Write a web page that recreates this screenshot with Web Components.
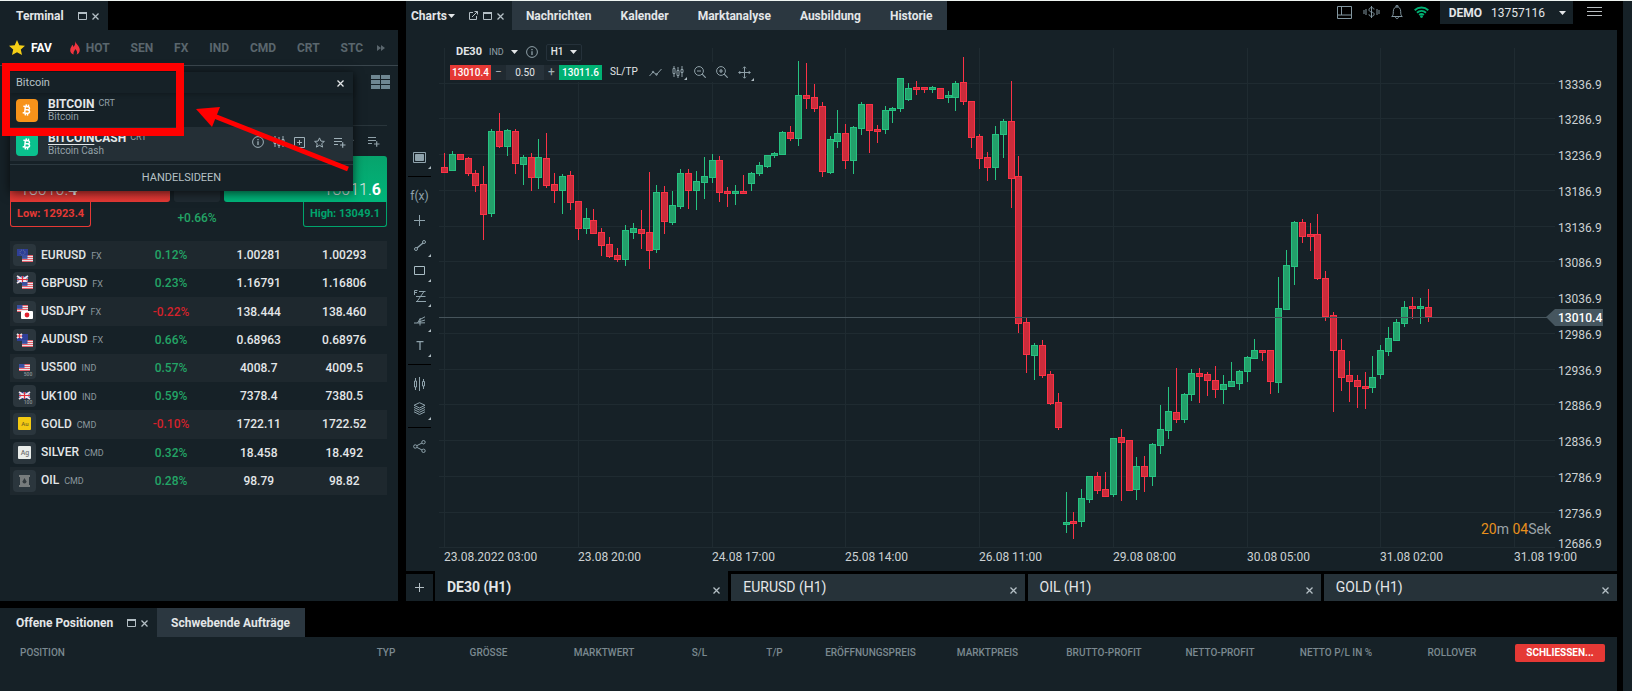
<!DOCTYPE html>
<html lang="de">
<head>
<meta charset="utf-8">
<meta name="viewport" content="width=device-width, initial-scale=1">
<title>Terminal</title>
<style>
  html, body { margin: 0; height: 100%; background: #000; }
  body {
    --panel: #162127; --tab: #2b3740; --text: #e3e6e8; --muted: #7b8990;
    --green: #23a566; --buy: #00b173; --red: #e53935; --line: #2b383f;
    font-family: Roboto, "Noto Sans", sans-serif; font-size: 12px; line-height: 16px; color: var(--text);
  }
</style>
</head>
<body>
<trading-app></trading-app>
<script>
const RESET = `
  *, *::before { box-sizing: border-box; }
  button, input, select { font: inherit; color: inherit; background: none; border: 0; margin: 0; padding: 0; border-radius: 0; outline: 0; }
  button { cursor: pointer; white-space: nowrap; }
  a { color: inherit; text-decoration: none; }
  svg { display: block; }
`;

class BaseElement extends HTMLElement {
  connectedCallback() {
    if (this.shadowRoot) return;
    const root = this.attachShadow({ mode: 'open' });
    root.innerHTML = `<style>${RESET}${this.css()}</style>${this.html()}`;
    this.ready?.();
  }
  attr(name, fallback = '') { return this.getAttribute(name) ?? fallback; }
}

/* ---------- icons ---------- */
const ICONS = {
  max: [9, 8, '<path d="M.5 1h8v6.500h-8z"/><path d="M0 1h9" stroke-width="2"/>'],
  close: [7, 7, '<path d="M.5.5l6 6M6.500.5l-6 6" stroke-width="1.300"/>'],
  detach: [9, 9, '<path d="M4 1.500H.5v7h7V5M5.500.5h3v3M8.500.5L3 6"/>'],
  caret: [7, 4, '<path d="M0 0h7L3.500 4z" fill="currentColor" stroke="none"/>'],
  star: [16, 15, '<path d="M8 0l2.300 5.200 5.700.6-4.200 3.800 1.200 5.400L8 12.200 3 15l1.200-5.400L0 5.800l5.700-.6z" fill="#f5cf16" stroke="none"/>'],
  flame: [10, 14, '<path d="M5.200 0c.3 2.800 4.600 4.800 4.600 8.800 0 2.600-1.500 4.300-3.300 4.800 1.300-1.900.5-4-1.400-5.600-.2 1.700-2.300 3.300-1.300 5.600C1.600 13.200.2 11.500.2 9.300c0-2.500 1.600-3.800 2-5.500.8.5 1.200 1.200 1.300 2.200C4.900 4.600 5.500 2.600 5.200 0z" fill="#f0343f" stroke="none"/>'],
  more: [8, 6, '<path d="M0 0l4 3-4 3zM4 0l4 3-4 3z" fill="currentColor" stroke="none"/>'],
  tiles: [19, 14, '<path d="M0 0h9v4H0zM10 0h9v4h-9zM0 5h9v4H0zM10 5h9v4h-9zM0 10h9v4H0zM10 10h9v4h-9z" fill="#6f8792" stroke="none"/>'],
  info: [12, 12, '<circle cx="6" cy="6" r="5.400"/><path d="M6 5.200V9M6 3v1.200" stroke-width="1.300"/>'],
  candles: [12, 12, '<path d="M2 0v2M2 8v3M1 2.500h2v5H1zM6 1v3M6 10v2M5 4.500h2v5H5zM10 0v3M10 7v4M9 3.500h2v3H9z"/>'],
  plusbox: [11, 11, '<path d="M.5.5h10v10H.5zM5.500 3v5M3 5.500h5"/>'],
  staro: [11, 11, '<path d="M5.500.9l1.400 3.200 3.500.3-2.700 2.300.9 3.400-3.100-1.800-3.100 1.800.9-3.400L.6 4.400l3.500-.3z"/>'],
  listadd: [12, 11, '<path d="M0 1.500h8M0 4.500h8M0 7.500h4M6 8h5.500M8.700 5.200v5.500" stroke-width="1.200"/>'],
  spark: [13, 9, '<path d="M.5 8l3.500-4 3.500 2.500L12.500 1" /><circle cx="4" cy="4" r=".8"/><circle cx="7.500" cy="6.500" r=".8"/>'],
  zoomout: [12, 12, '<circle cx="5" cy="5" r="4.400"/><path d="M8.200 8.200l3.500 3.500M3 5h4" stroke-width="1.200"/>'],
  zoomin: [12, 12, '<circle cx="5" cy="5" r="4.400"/><path d="M8.200 8.200l3.500 3.500M3 5h4M5 3v4" stroke-width="1.200"/>'],
  move: [13, 13, '<path d="M6.500.8v11.400M.8 6.500h11.400M5 2.300L6.500.8 8 2.300M5 10.700l1.500 1.500L8 10.700M2.300 5L.8 6.500 2.300 8M10.700 5l1.500 1.500L10.700 8"/>'],
  frame: [13, 11, '<path d="M.5.5h12v10H.5z"/><path d="M2.500 2.500h8v6h-8z" fill="currentColor"/>'],
  plus: [11, 11, '<path d="M5.500 0v11M0 5.500h11"/>'],
  add: [9, 9, '<path d="M4.500 0v9M0 4.500h9"/>'],
  trend: [12, 11, '<circle cx="10" cy="2" r="1.500"/><circle cx="2" cy="9" r="1.500"/><path d="M3 8l6-5" stroke-width="1.400"/>'],
  rect: [11, 9, '<path d="M.5.5h10v8H.5z" stroke="#a9bcc4"/>'],
  fib: [12, 12, '<path d="M.5 5V.5h3M.5 2.500h2.500M5 1.500h6.500M2 6.500h9.500M2 11.500h10M10 1.500l-7 10"/>'],
  pitch: [12, 10, '<path d="M0 7h3.500l3-5M11 .8L6 3.500v6M5 5.800L11 4M3.500 7L11 6.800"/>'],
  text: [8, 9, '<path d="M.5.5h7M4 .5V9" stroke-width="1.300"/>'],
  bars: [11, 14, '<path d="M1.500 1v3M1.500 10v3M.5 4h2v6h-2zM5.500 0v14M9.500 2v2.500M9.500 9v3M8.500 4.500h2V9h-2z"/>'],
  layers: [13, 13, '<path d="M6.500.7l5.500 2.600-5.500 2.700L1 3.300zM1 5.400l5.500 2.700L12 5.400M1 7.600l5.500 2.700L12 7.600M1 9.800l5.500 2.700L12 9.800"/>'],
  share: [13, 13, '<circle cx="2.300" cy="6.500" r="1.700"/><circle cx="10.500" cy="2.200" r="1.700"/><circle cx="10.500" cy="10.800" r="1.700"/><path d="M3.800 5.700L9 3M3.800 7.300L9 10"/>'],
  layout: [15, 13, '<path d="M.5.5h14v12H.5zM4.500.5v8.500M.5 9h14"/>'],
  sound: [17, 14, '<path d="M1 5v4M3 4v6M14 4v6M16 5v4M11 4.500C11 3.200 10 2.700 8.500 2.700S6 3.300 6 4.800 7.200 6.700 8.500 7s2.600.7 2.600 2.200-1.100 2.100-2.600 2.100S6 10.700 6 9.300M8.500 1v12"/>'],
  bell: [12, 15, '<path d="M.7 11.500c1.500-1 1.600-2.500 1.600-5C2.300 3.500 3.800 2 6 2s3.700 1.500 3.700 4.500c0 2.500.1 4 1.600 5zM5 2V.7h2V2M4.500 11.700c0 2.600 3 2.600 3 0"/>'],
  wifi: [15, 12, '<path d="M.7 4.200a10 10 0 0 1 13.600 0M3 6.700a6.500 6.500 0 0 1 9 0M5.200 9a3.300 3.300 0 0 1 4.600 0" stroke="#00b173" stroke-width="1.900"/><circle cx="7.500" cy="10.600" r="1.400" fill="#00b173" stroke="none"/>'],
  menu: [15, 10, '<path d="M0 .5h15M0 4.500h15M0 8.500h15" stroke="#b9bec1"/>'],
  btc: [12, 14, '<g transform="rotate(6 6 7)"><path d="M4 3.700v6.600M2 3.700h4.600c2.300 0 2.300 3.100 0 3.100H4M6.600 6.900c2.800 0 2.800 3.400 0 3.400H2M4.800 1.500v2M7 1.500v2M4.800 10.500v2M7 10.500v2" stroke="#fff" stroke-width="1.500"/></g>']
};
class UiIcon extends BaseElement {
  css() { return ':host { display: inline-flex; flex: none; }'; }
  html() {
    const [w, h, body] = ICONS[this.attr('name')];
    return `<svg width="${w}" height="${h}" viewBox="0 0 ${w} ${h}" fill="none" stroke="currentColor" aria-hidden="true">${body}</svg>`;
  }
}
const icon = n => `<ui-icon name="${n}"></ui-icon>`;

/* ---------- instrument badge ---------- */
const us = (x, y, w, h) => `<path fill="#e9e3e6" d="M${x} ${y}h${w}v${h}h-${w}z"/><path stroke="#e4606c" d="M${x} ${y + .5}h${w}M${x} ${y + 2.5}h${w}M${x} ${y + 4.5}h${w}M${x} ${y + h - .5}h${w}"/><path fill="#3a4fa0" d="M${x} ${y}h${w * .5}v${h * .55}h-${w * .5}z"/>`;
const uk = (x, y, w, h) => `<path fill="#33418f" d="M${x} ${y}h${w}v${h}h-${w}z"/><path stroke="#f1e8ec" stroke-width="1.800" d="M${x} ${y}l${w} ${h}M${x + w} ${y}l-${w} ${h}M${x + w / 2} ${y}v${h}M${x} ${y + h / 2}h${w}"/><path stroke="#e0303e" stroke-width="1.200" d="M${x + w / 2} ${y}v${h}M${x} ${y + h / 2}h${w}"/>`;
const eu = '<path fill="#2f3f96" d="M4 5h11v7H4z"/><circle cx="9.500" cy="8.500" r="2.500" fill="none" stroke="#6d78a0" stroke-dasharray="1 1"/>';
const tag = t => `<text x="15" y="19" font-size="5" text-anchor="middle" fill="#8d979c">${t}</text>`;
const BADGES = {
  EURUSD: eu + us(9, 11, 11, 7), GBPUSD: uk(4, 4, 11, 7) + us(9, 10, 11, 7),
  USDJPY: us(4, 4, 11, 7) + '<rect x="8" y="10" width="12" height="8" rx="1" fill="#fff"/><circle cx="14" cy="14" r="2.400" fill="#e0202e"/>',
  AUDUSD: '<path fill="#2f3f96" d="M4 5h11v7H4z"/>' + uk(4, 5, 5, 4) + us(9, 11, 11, 7),
  US500: us(6, 7, 11, 7) + tag('500'), UK100: uk(6, 7, 11, 7) + tag('100'),
  GOLD: '<rect x="5" y="4" width="13" height="13" rx="1" fill="#f4ca12"/><text x="12" y="13" font-size="6" text-anchor="middle" fill="#7b6a20">Au</text>',
  SILVER: '<rect x="5" y="4" width="13" height="13" rx="1" fill="#e9edea"/><text x="12" y="13" font-size="7" text-anchor="middle" fill="#777">Ag</text>',
  OIL: '<path fill="#777c7d" d="M6 5h11v2h-1v8h1v2H6v-2h1V7H6z"/><path fill="#333b3f" d="M11.500 8l2 3.500a2 2 0 1 1-4 0z"/>'
};
class AssetBadge extends BaseElement {
  css() { return ':host { display: block; width: 23px; height: 22px; border-radius: 4px; background: #2b363d; }'; }
  html() { return `<svg width="23" height="22" fill="none" aria-hidden="true">${BADGES[this.attr('symbol')].replace(/<path fill/g, '<path stroke="none" fill')}</svg>`; }
}

/* ---------- tabs ---------- */
class PanelTab extends BaseElement {
  css() { return `
    :host { display: flex; align-items: center; height: 29px; padding: 0 15px 0 14px; gap: 14px; background: var(--tab); font-weight: 700; }
    :host([active]) { background: var(--panel); padding: 0 9px 0 16px; }
    :host([active][compact]) { padding: 0 8px 0 5px; }
    .tools { display: flex; gap: 5px; align-items: center; color: #b4bfc5; }
    .name { display: flex; align-items: center; gap: 1px; }
  `; }
  html() {
    const tools = this.attr('tools').split(' ').filter(Boolean);
    return `<button class="name"><slot></slot></button>` +
      (tools.length ? `<span class="tools">${tools.map(t => `<button aria-label="${t}">${icon(t)}</button>`).join('')}</span>` : '');
  }
}

/* ---------- search popup ---------- */
class SearchHit extends BaseElement {
  css() { return `
    :host { display: flex; align-items: center; height: 34px; padding: 0 7px 0 6px; gap: 10px; }
    :host([selected]) { background: #242f36; }
    .logo { display: flex; align-items: center; justify-content: center; width: 22px; height: 23px; border-radius: 4px; background: var(--logo); }
    .text { flex: 1; }
    .title { font-weight: 700; line-height: 13px; }
    u { text-underline-offset: 2px; }
    sup { font-size: 9px; line-height: 8px; font-weight: 400; color: #93a0a7; margin-left: 4px; vertical-align: 2px; }
    .sub { font-size: 10px; line-height: 11px; color: #93a0a7; }
    .tools { display: flex; align-items: center; gap: 9px; color: #9fb0b8; }
    :host(:not([selected])) .tools { display: none; }
  `; }
  html() { return `
    <span class="logo">${icon('btc')}</span>
    <div class="text"><div class="title"><u>BITCOIN</u>${this.attr('rest')}<sup>CRT</sup></div><div class="sub">${this.attr('sub')}</div></div>
    <span class="tools">${['info', 'candles', 'plusbox', 'staro', 'listadd'].map(n => `<button aria-label="${n}">${icon(n)}</button>`).join('')}</span>`; }
}
class SearchPopup extends BaseElement {
  css() { return `
    :host { display: block; background: var(--panel); box-shadow: 0 2px 10px #000a; }
    .field { display: flex; align-items: center; height: 21px; padding: 0 9px 0 6px; box-shadow: 0 2px 4px #0003; }
    input { flex: 1; min-width: 0; font-size: 11px; color: #b7c1c6; }
    .ideas { display: block; width: 100%; height: 27px; margin-top: 3px; border-top: 1px solid var(--line); font-size: 11px; color: #b7c1c6; }
  `; }
  html() { return `
    <div class="field"><input aria-label="Suche" value="Bitcoin"><button aria-label="Leeren">${icon('close')}</button></div>
    <search-hit sub="Bitcoin" style="--logo:#f7931a"></search-hit>
    <search-hit selected rest="CASH" sub="Bitcoin Cash" style="--logo:#0ac18e"></search-hit>
    <button class="ideas">HANDELSIDEEN</button>`; }
}

/* ---------- quotes ---------- */
class QuoteCard extends BaseElement {
  css() { return `
    :host { display: block; }
    .deal { display: grid; grid-template-columns: 160px 1fr 163px; gap: 4px; height: 46px; }
    .deal > * { border-radius: 3px; display: flex; align-items: flex-end; padding: 0 10px 2px; font-size: 16px; line-height: 20px; font-weight: 300; }
    .sell { background: linear-gradient(#c93433, #e53935); border-bottom-left-radius: 0; }
    .mid { background: #202b32; }
    .buy { background: linear-gradient(#07a36c, #00b57a); justify-content: flex-end; border-bottom-right-radius: 0; padding-right: 6px; }
    b { font-weight: 700; color: #fff; }
    .range { display: flex; justify-content: space-between; font-weight: 700; }
    .range span { height: 25px; line-height: 23px; padding: 0 6px; border: 1px solid; border-top: 0; border-radius: 0 0 3px 3px; font-size: 11px; }
    .low { color: var(--red); }
    .high { color: #00a46c; }
    .range em { font-style: normal; font-weight: 500; color: var(--green); padding-top: 8px; }
  `; }
  html() { return `
    <div class="deal"><button class="sell">13010.<b>4</b></button><span class="mid"></span><button class="buy">13011.<b>6</b></button></div>
    <div class="range"><span class="low">Low: 12923.4</span><em>+0.66%</em><span class="high">High: 13049.1</span></div>`; }
}
class QuoteTable extends BaseElement {
  css() { return `
    :host { display: block; }
    table { width: 100%; height: 254px; border-collapse: collapse; table-layout: fixed; font-weight: 500; }
    td, th { height: 28px; padding: 0; text-align: center; font-weight: 500; }
    tr:nth-child(odd) { background: #1e282e; }
    .badge { width: 31px; padding-left: 3px; }
    th { width: 85px; text-align: left; white-space: nowrap; }
    th small { font-size: 9px; font-weight: 400; color: #8b979d; margin-left: 2px; }
    .pct { width: 90px; color: var(--green); }
    .down { color: #d3222b; }
  `; }
  html() {
    const rows = [
      ['EURUSD', 'FX', '0.12%', '1.00281', '1.00293'], ['GBPUSD', 'FX', '0.23%', '1.16791', '1.16806'],
      ['USDJPY', 'FX', '-0.22%', '138.444', '138.460'], ['AUDUSD', 'FX', '0.66%', '0.68963', '0.68976'],
      ['US500', 'IND', '0.57%', '4008.7', '4009.5'], ['UK100', 'IND', '0.59%', '7378.4', '7380.5'],
      ['GOLD', 'CMD', '-0.10%', '1722.11', '1722.52'], ['SILVER', 'CMD', '0.32%', '18.458', '18.492'],
      ['OIL', 'CMD', '0.28%', '98.79', '98.82']];
    return `<table><tbody>${rows.map(([s, k, p, b, a]) => `<tr><td class="badge"><asset-badge symbol="${s}"></asset-badge></td>
      <th scope="row">${s} <small>${k}</small></th><td class="pct ${p[0] === '-' ? 'down' : ''}">${p}</td><td>${b}</td><td>${a}</td></tr>`).join('')}</tbody></table>`;
  }
}

/* ---------- left panel ---------- */
class TerminalPanel extends BaseElement {
  css() { return `
    :host { display: flex; flex-direction: column; }
    .tabs { display: flex; }
    .body { position: relative; flex: 1; background: var(--panel); }
    nav { display: flex; align-items: center; justify-content: space-between; height: 36px; padding: 0 13px 0 9px; border-bottom: 1px solid #3a464d; color: #5a666d; }
    nav button { display: flex; align-items: center; gap: 6px; font-weight: 700; }
    nav .hot { margin-left: -3px; }
    nav .more { margin-left: -7px; }
    nav .on { color: #fff; }
    .content { padding: 0 11px 0 10px; }
    .view { display: flex; justify-content: flex-end; align-items: center; height: 60px; border-bottom: 1px solid #29353b; }
    .view button { margin: 0 -3px 24px 0; }
    .acts { display: flex; justify-content: flex-end; align-items: center; height: 30px; padding-right: 7px; gap: 14px; color: #8fa0a8; }
    quote-table { margin-top: 14px; }
    search-popup { position: absolute; left: 10px; right: 45px; top: 42px; }
  `; }
  html() { return `
    <div class="tabs"><panel-tab active tools="max close">Terminal</panel-tab></div>
    <div class="body">
      <nav><button class="on">${icon('star')}FAV</button><button class="hot">${icon('flame')}HOT</button>
        ${['SEN', 'FX', 'IND', 'CMD', 'CRT', 'STC'].map(t => `<button>${t}</button>`).join('')}<button class="more" aria-label="Mehr">${icon('more')}</button></nav>
      <div class="content">
        <div class="view"><button aria-label="Ansicht">${icon('tiles')}</button></div>
        <div class="acts">${icon('staro')}${icon('listadd')}</div>
        <quote-card></quote-card>
        <quote-table></quote-table>
      </div>
      <search-popup></search-popup>
    </div>`; }
}

/* ---------- candle chart ---------- */
/* Each candle: direction, then high, body top, body bottom, low, in scale units.
   One unit is 1.4 points, counted down from the top of the scale. */
const CANDLES = `r153,167,173,173 g151,154,171,171 r154,154,160,160 r157,158,174,176 r170,173,186,192 r166,184,215,240 g129,131,214,217 r129,131,147,148 g129,130,147,156 r129,131,164,174
g155,157,165,185 r153,157,178,191 g139,157,178,189 r133,158,186,188 r173,184,191,203 g174,176,191,214 r171,175,203,210 r201,201,229,240 g208,218,229,234 r209,220,234,234
r228,232,246,256 r237,244,257,258 r248,255,260,262 g225,230,260,266 g223,228,233,239 r210,229,234,249 r172,232,251,269 g185,192,250,253 r186,192,222,234 g191,205,223,225
g169,173,207,209 r169,173,191,209 g171,181,191,210 g157,176,183,199 g154,160,178,183 r156,160,193,202 r187,191,194,207 g185,191,194,205 r175,191,194,194 g172,173,184,191
g162,165,174,176 g155,155,167,168 g152,153,156,158 g131,132,155,155 r126,132,139,141 g61,95,139,146 r63,95,99,109 r84,97,109,112 r102,106,172,177 g136,139,173,174
g110,133,142,148 r124,133,161,169 g126,127,161,174 g102,104,129,135 r104,104,131,153 r125,129,132,143 g106,110,130,134 g107,108,111,123 g78,78,109,112 g83,88,100,101
r81,87,90,95 r87,87,90,93 g86,87,90,93 r88,88,99,99 g91,95,98,103 g81,83,98,111 r57,82,102,105 r101,101,138,148 r134,136,159,169 r152,157,168,181
g126,134,168,180 g119,121,135,158 r81,121,179,208 r156,176,324,333 r317,322,355,373 g343,345,356,380 r340,345,376,378 r371,374,404,405 r393,402,428,430 g492,522,525,533
r512,521,524,539 g489,498,522,527 g476,476,500,503 r472,476,491,494 r472,489,497,497 g438,438,495,497 r429,437,443,501 r440,440,491,491 g457,466,490,500 r456,466,477,492
g443,444,477,486 g405,429,446,454 g387,411,431,439 r368,412,420,423 g393,394,420,423 g369,373,395,401 r368,373,377,403 r372,374,381,396 r366,380,390,398 g375,384,390,404
g362,381,387,387 g370,371,384,390 g356,357,372,382 g339,350,359,359 r350,350,353,361 r350,350,382,394 g277,308,383,393 g250,265,310,310 g221,222,267,285 r219,222,237,243
r223,234,237,251 r214,234,279,280 r271,278,317,321 r312,315,351,412 r339,350,378,391 r361,375,382,402 r375,380,387,408 r372,386,389,409 g356,377,388,393 g345,350,375,379
g327,338,352,356 g319,322,341,341 g301,307,324,327 r297,306,309,319 g298,306,309,324 r289,307,317,322`.split(/\s+/).map(t => [t[0], ...t.slice(1).split(',').map(Number)]);
CANDLES[7][1] = 113;
const TIMES = ['23.08.2022 03:00', '23.08 20:00', '24.08 17:00', '25.08 14:00', '26.08 11:00', '29.08 08:00', '30.08 05:00', '31.08 02:00', '31.08 19:00'];

class CandleChart extends BaseElement {
  css() { return `
    :host { display: block; min-width: 0; overflow: hidden; }
    svg { width: 100%; height: 100%; }
    text { font-size: 12px; fill: #ccd1d3; }
    .count { font-size: 14px; fill: #9ba4a8; }
    .count tspan { fill: #e8901c; }
    .now { fill: #fff; font-weight: 500; }
    .g { fill: #23a06a; stroke: #26c281; } .r { fill: #cb2c3b; stroke: #fb3246; }
    .grid { stroke: #1f2b31; }
  `; }
  html() { return '<svg role="img" aria-label="DE30 H1"></svg>'; }
  ready() {
    this.draw();
    new ResizeObserver(() => this.draw()).observe(this);
  }
  draw() {
    const W = this.clientWidth, H = this.clientHeight;
    if (!W || !H) return;
    const right = W - 62, bottom = H - 23;
    const sy = v => Math.round((v - 30) * bottom / 518);
    const step = (right - 7) / 141.200;
    const sx = i => Math.round(7 + i * step);
    let out = '<g class="grid">';
    TIMES.forEach((t, k) => out += `<path d="M${sx(17 * k) + .5} 18V${bottom}"/>`);
    for (let k = 0; k < 14; k++) out += `<path d="M2 ${sy(83.5 + 35.75 * k) - .5}H${right}"/>`;
    out += '</g>';
    CANDLES.forEach(([c, h, a, b, l], i) => {
      const x = sx(i) + .5, top = sy(a) + .5, ht = Math.max(1, sy(b) - sy(a) - 1);
      out += `<g class="${c}"><path d="M${x} ${sy(h)}V${sy(l)}"/><rect x="${x - 3}" y="${top}" width="6" height="${ht}"/></g>`;
    });
    for (let k = 0; k < 14; k++)
      out += `<text x="${W - 59}" y="${k === 13 ? bottom : sy(83.5 + 35.75 * k) + 5}">${(13336.9 - 50 * k).toFixed(1)}</text>`;
    TIMES.forEach((t, k) => out += `<text x="${sx(17 * k)}" y="${H - 10}">${t}</text>`);
    const y = sy(317);
    out += `<path d="M2 ${y + .5}H${right - 8}" stroke="#46545b"/>
      <path d="M${W - 71} ${y}l9-8h48v17h-48z" fill="#46565f"/><text class="now" x="${W - 59}" y="${y + 5}">13010.4</text>
      <text class="count" x="${right - 4}" y="${bottom - 14}" text-anchor="end"><tspan>20</tspan>m <tspan>04</tspan>Sek</text>`;
    this.shadowRoot.querySelector('svg').innerHTML = out;
  }
}

class DrawTools extends BaseElement {
  css() { return `
    :host { display: flex; flex-direction: column; padding: 115px 6px 0 2px; color: #7d929c; }
    button { position: relative; display: flex; align-items: center; justify-content: center; height: 25px; font-size: 12px; color: #8fa3ac; }
    .sub::before { content: ""; position: absolute; right: 0; bottom: 1px; border-top: 3px solid transparent; border-right: 3px solid #aebbc1; }
    hr { width: 100%; margin: 6px 0; border: 0; height: 1px; background: #000; }
  `; }
  html() {
    const b = (n, sub) => `<button class="${sub ? 'sub' : ''}" aria-label="${n}">${icon(n)}</button>`;
    return b('frame', 1) + '<hr><button>f(x)</button>' + b('plus') + ['trend', 'rect', 'fib', 'pitch', 'text'].map(n => b(n, 1)).join('') +
      '<hr>' + b('bars') + b('layers', 1) + '<hr>' + b('share');
  }
}

class ChartBar extends BaseElement {
  css() { return `
    :host { display: flex; flex-direction: column; align-items: flex-start; }
    .row { display: flex; align-items: center; background: var(--panel); }
    .first { height: 18px; padding-left: 6px; gap: 8px; }
    .asset { display: flex; align-items: center; gap: 7px; font-size: 11px; font-weight: 700; }
    .asset small { font-size: 9px; font-weight: 400; color: #93a0a7; }
    .tf { display: flex; align-items: center; height: 17px; padding: 0 4px; border: 1px solid #25313a; border-radius: 2px; font-size: 10px; font-weight: 500; }
    .tf select { appearance: none; width: 19px; }
    .grey { color: #8fa0a8; }
    .second { height: 20px; margin-top: 1px; padding-right: 5px; font-size: 10px; gap: 11px; }
    .deal { display: flex; align-items: stretch; height: 15px; line-height: 15px; }
    .deal button, .deal input { text-align: center; height: 15px; }
    .sell { width: 41px; background: var(--red); } .buy { width: 43px; background: var(--buy); }
    .sell, .buy { color: #fff; font-weight: 500; }
    .step { width: 15px; background: #202a31; font-size: 12px; line-height: 13px; color: #a5b0b5; }
    input { width: 38px; background: #27323a; }
    .slots { margin-left: -3px; }
    .tools { gap: 10px; }
    .ic { position: relative; display: flex; }
    .sub::before { content: ""; position: absolute; right: -3px; bottom: -2px; border-top: 3px solid transparent; border-right: 3px solid #aebbc1; }
  `; }
  html() {
    const b = (n, c = '') => `<button class="ic ${c}" aria-label="${n}">${icon(n)}</button>`;
    return `
    <div class="row first"><button class="asset">DE30 <small>IND</small>${icon('caret')}</button><button class="ic grey" aria-label="Info">${icon('info')}</button>
      <label class="tf"><select aria-label="Zeitrahmen"><option>H1</option></select>${icon('caret')}</label></div>
    <div class="row second"><span class="deal"><button class="sell">13010.4</button><button class="step">−</button><input aria-label="Lots" value="0.50"><button class="step">+</button><button class="buy">13011.6</button></span>
      <button class="slots">SL/TP</button><span class="row grey tools">${b('spark')}${b('candles', 'sub')}${b('zoomout')}${b('zoomin')}${b('move', 'sub')}</span></div>`;
  }
}

class ChartTab extends BaseElement {
  css() { return `
    :host { display: flex; flex: 1; align-items: center; justify-content: space-between; height: 27px; padding: 0 8px 1px 12px; background: #263239; font-size: 14px; }
    :host([active]) { background: var(--panel); font-weight: 700; padding-top: 3px; height: 30px; }
    button + button { color: #b4bfc5; padding-top: 3px; }
  `; }
  html() { return `<button><slot></slot></button><button aria-label="Schließen">${icon('close')}</button>`; }
}

class ChartsPanel extends BaseElement {
  css() { return `
    :host { display: flex; flex-direction: column; min-width: 0; }
    header { display: flex; justify-content: space-between; align-items: flex-start; }
    .tabs { display: flex; }
    .status { display: flex; align-items: center; gap: 11px; height: 23px; padding-right: 15px; color: #8296a0; }
    .status > button { padding-top: 3px; }
    .account { display: flex; align-items: center; height: 23px; padding: 0 7px 0 9px; background: var(--panel); color: var(--text); gap: 9px; font-weight: 700; }
    .account select { appearance: none; width: 59px; font-weight: 400; }
    .status .menu { margin-left: 3px; padding-top: 0; }
    .stage { position: relative; flex: 1; display: grid; grid-template-columns: 31px 1fr; min-height: 480px; background: var(--panel); }
    chart-bar { position: absolute; left: 44px; top: 13px; }
    footer { display: flex; align-items: flex-end; gap: 3px; }
    .add { display: flex; align-items: center; justify-content: center; width: 27px; height: 27px; margin-right: -1px; background: var(--panel); color: #b4bfc5; }
  `; }
  html() { return `
    <header><div class="tabs"><panel-tab active compact tools="detach max close">Charts${icon('caret')}</panel-tab>
      ${['Nachrichten', 'Kalender', 'Marktanalyse', 'Ausbildung', 'Historie'].map(t => `<panel-tab>${t}</panel-tab>`).join('')}</div>
      <div class="status">${['layout', 'sound', 'bell', 'wifi'].map(n => `<button aria-label="${n}">${icon(n)}</button>`).join('')}
        <label class="account">DEMO <select><option>13757116</option></select>${icon('caret')}</label>
        <button class="menu" aria-label="Menü">${icon('menu')}</button></div></header>
    <div class="stage"><draw-tools></draw-tools><candle-chart></candle-chart><chart-bar></chart-bar></div>
    <footer><button class="add" aria-label="Neu">${icon('add')}</button><chart-tab active>DE30 (H1)</chart-tab><chart-tab>EURUSD (H1)</chart-tab><chart-tab>OIL (H1)</chart-tab><chart-tab>GOLD (H1)</chart-tab></footer>`; }
}

/* ---------- positions ---------- */
class PositionsPanel extends BaseElement {
  css() { return `
    :host { display: block; }
    .tabs { display: flex; }
    .body { min-height: 54px; padding-top: 6px; background: var(--panel); }
    table { width: 100%; table-layout: fixed; border-collapse: collapse; }
    th { padding: 0; height: 20px; font-size: 10px; font-weight: 500; color: var(--muted); white-space: nowrap; }
    th:first-child { text-align: left; padding-left: 20px; }
    th:last-child { padding-right: 9px; }
    .close { display: block; width: 90px; height: 18px; margin-left: auto; margin-right: 3px; border-radius: 2px; background: var(--red); color: #fff; font-weight: 700; }
  `; }
  html() {
    const cols = [['POSITION', 0], ['TYP', 90], ['GRÖSSE', 115], ['MARKTWERT', 116], ['S/L', 75], ['T/P', 75], ['ERÖFFNUNGSPREIS', 117], ['MARKTPREIS', 117], ['BRUTTO-PROFIT', 116], ['NETTO-PROFIT', 116], ['NETTO P/L IN %', 116], ['ROLLOVER', 116]];
    return `<div class="tabs"><panel-tab active tools="max close">Offene Positionen</panel-tab><panel-tab>Schwebende Aufträge</panel-tab></div>
    <div class="body"><table><thead><tr>${cols.map(([t, w]) => `<th scope="col"${w ? ` style="width:${w}px"` : ''}>${t}</th>`).join('')}<th style="width:107px"><button class="close">SCHLIESSEN...</button></th></tr></thead></table></div>`;
  }
}

/* ---------- hint drawn over the search result ---------- */
class HintMark extends BaseElement {
  css() { return ':host { display: block; pointer-events: none; }'; }
  html() { return `<svg width="360" height="180" aria-hidden="true"><rect x="6" y="66" width="174" height="65" fill="none" stroke="#f00" stroke-width="8"/>
    <path d="M348 168L214 115" stroke="#f00" stroke-width="5"/><path d="M196 108l24-2-8 20z" fill="#f00"/></svg>`; }
}

class TradingApp extends BaseElement {
  css() { return `
    :host { display: grid; position: relative; box-sizing: border-box; min-height: 100vh; border-top: 1px solid #eef4f1; grid-template-columns: 398px minmax(0, 1fr) 9px; grid-template-rows: 1fr auto; background: #000; }
    charts-panel { margin: 0 6px 0 8px; }
    positions-panel { grid-row: 2; grid-column: 1 / 3; margin: 7px 6px 0 0; }
    aside { grid-column: 3; grid-row: 1 / 3; background: var(--panel); }
    hint-mark { position: absolute; left: 0; top: 0; }
  `; }
  html() { return '<terminal-panel></terminal-panel><charts-panel></charts-panel><aside></aside><positions-panel></positions-panel><hint-mark></hint-mark>'; }
}

Object.entries({
  'ui-icon': UiIcon, 'asset-badge': AssetBadge, 'panel-tab': PanelTab, 'search-hit': SearchHit, 'search-popup': SearchPopup,
  'quote-card': QuoteCard, 'quote-table': QuoteTable, 'terminal-panel': TerminalPanel, 'candle-chart': CandleChart,
  'draw-tools': DrawTools, 'chart-bar': ChartBar, 'chart-tab': ChartTab, 'charts-panel': ChartsPanel,
  'positions-panel': PositionsPanel, 'hint-mark': HintMark, 'trading-app': TradingApp
}).forEach(([name, type]) => customElements.define(name, type));
</script>
</body>
</html>
